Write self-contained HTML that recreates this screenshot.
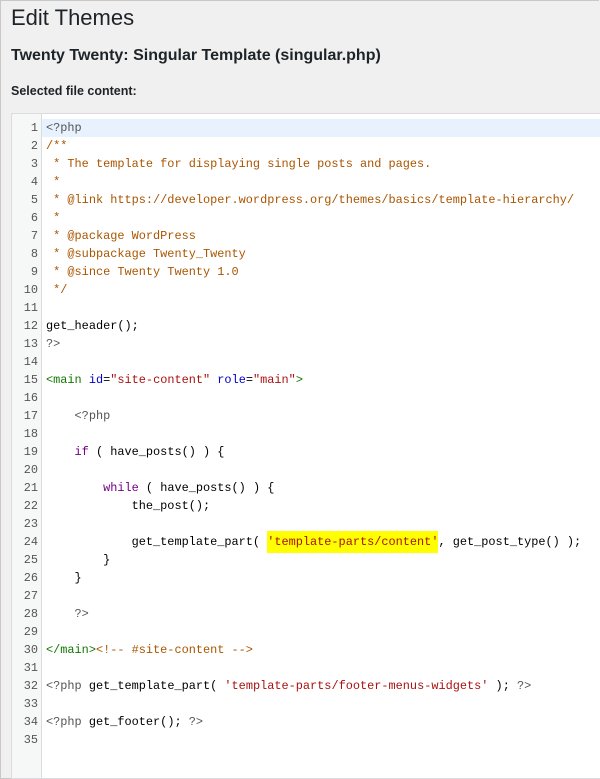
<!DOCTYPE html><html><head><style>
body{margin:0;width:600px;height:779px;overflow:hidden;background:#f0f0f0;font-family:"Liberation Sans",sans-serif;}
.frame{position:absolute;left:0;top:0;width:598px;height:777px;border:1px solid #c8c8c8;border-right:none;}
h1{position:absolute;left:11px;top:5px;margin:0;font-weight:400;font-size:22px;color:#1d2327;}
h2{position:absolute;left:11px;top:47px;margin:0;font-weight:600;font-size:16px;color:#1d2327;}
.lab{position:absolute;left:11px;top:84px;font-size:12.5px;font-weight:600;color:#1d2327;}
.ed{position:absolute;left:11px;top:113px;width:600px;height:664px;background:#fff;border:1px solid #dcdcde;}
.gut{position:absolute;left:0;top:0;width:29px;height:100%;background:#f6f7f7;border-right:1px solid #dcdcde;}
.hl{position:absolute;left:30px;top:5px;width:580px;height:18px;background:#e8f2ff;}
pre{position:absolute;top:5px;margin:0;font-family:"Liberation Mono",monospace;font-size:11.9px;line-height:18px;}
.ln{left:0;width:26px;text-align:right;color:#555;}
.code{left:34px;color:#000;}
.p{color:#555}.c{color:#a50}.k{color:#708}.t{color:#170}.a{color:#00c}.s{color:#a11}
.y{background:#ff0;padding:4px 0}
</style></head><body><div class="frame"></div>
<h1>Edit Themes</h1><h2>Twenty Twenty: Singular Template (singular.php)</h2>
<div class="lab">Selected file content:</div>
<div class="ed"><div class="gut"></div><div class="hl"></div>
<pre class="ln">1
2
3
4
5
6
7
8
9
10
11
12
13
14
15
16
17
18
19
20
21
22
23
24
25
26
27
28
29
30
31
32
33
34
35</pre>
<pre class="code"><span class="p">&lt;?php</span>
<span class="c">/**
 * The template for displaying single posts and pages.
 *
 * @link https://developer.wordpress.org/themes/basics/template-hierarchy/
 *
 * @package WordPress
 * @subpackage Twenty_Twenty
 * @since Twenty Twenty 1.0
 */</span>

get_header();
<span class="p">?&gt;</span>

<span class="t">&lt;main</span> <span class="a">id</span>=<span class="s">"site-content"</span> <span class="a">role</span>=<span class="s">"main"</span><span class="t">&gt;</span>

    <span class="p">&lt;?php</span>

    <span class="k">if</span> ( have_posts() ) {

        <span class="k">while</span> ( have_posts() ) {
            the_post();

            get_template_part( <span class="s y">'template-parts/content'</span>, get_post_type() );
        }
    }

    <span class="p">?&gt;</span>

<span class="t">&lt;/main&gt;</span><span class="c">&lt;!-- #site-content --&gt;</span>

<span class="p">&lt;?php</span> get_template_part( <span class="s">'template-parts/footer-menus-widgets'</span> ); <span class="p">?&gt;</span>

<span class="p">&lt;?php</span> get_footer(); <span class="p">?&gt;</span>
</pre></div>
</body></html>
